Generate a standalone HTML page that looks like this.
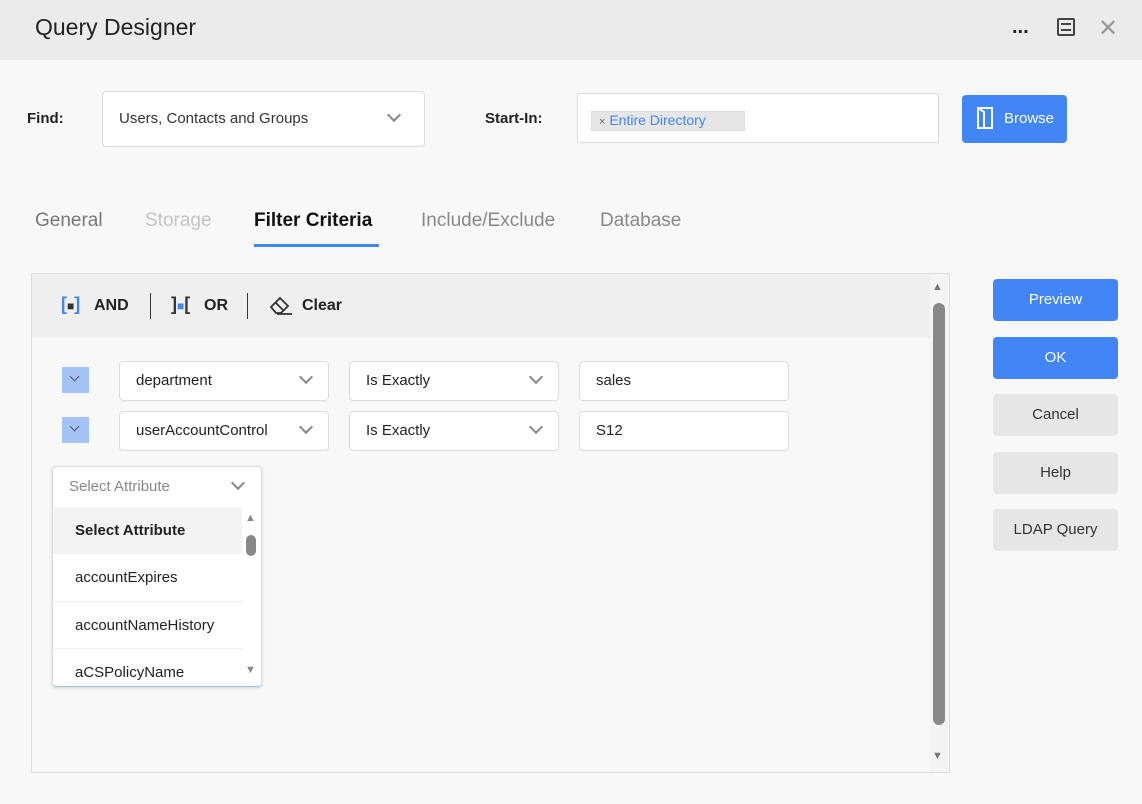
<!DOCTYPE html>
<html><head><style>
*{box-sizing:border-box;margin:0;padding:0}
body{width:1142px;height:804px;background:#f8f8f8;font-family:"Liberation Sans",sans-serif;position:relative;overflow:hidden;color:#222}
.a{position:absolute}
.box{position:absolute;background:#fff;border:1px solid #dcdcdc;border-radius:4px}
.chev{position:absolute;width:10px;height:10px;border-right:2px solid #888;border-bottom:2px solid #888;transform:rotate(45deg)}
.t{position:absolute;white-space:nowrap}
.btn{position:absolute;left:993px;width:125px;border-radius:4px;font-size:15px;text-align:center}
.blue{background:#4285f4;color:#fff}
.grey{background:#e6e6e6;color:#333}
</style></head><body>
<div class="a" style="left:0;top:0;width:1142px;height:60px;background:#ebebeb"></div>
<div class="t" style="left:35px;top:14px;font-size:23px;color:#222">Query Designer</div>
<div class="t" style="left:1012px;top:16px;font-size:20px;font-weight:bold">...</div>
<div class="a" style="left:1057px;top:18px;width:18px;height:18px;border:2px solid #444;border-radius:2px"></div>
<div class="a" style="left:1061px;top:23px;width:10px;height:8px;border-top:2px solid #444;border-bottom:2px solid #444"></div>
<div class="t" style="left:1098px;top:14px;font-size:24px;color:#999">✕</div>

<div class="t" style="left:27px;top:110px;font-size:15px;font-weight:bold">Find:</div>
<div class="box" style="left:102px;top:91px;width:323px;height:56px"></div>
<div class="t" style="left:119px;top:110px;font-size:15px;color:#333">Users, Contacts and Groups</div>
<div class="chev" style="left:389px;top:110px"></div>
<div class="t" style="left:485px;top:110px;font-size:15px;font-weight:bold">Start-In:</div>
<div class="box" style="left:577px;top:93px;width:362px;height:50px;border-radius:2px"></div>
<div class="a" style="left:591px;top:111px;width:154px;height:20px;background:#e6e6e6;border:1px solid #ddd"></div>
<div class="t" style="left:599px;top:112px;font-size:14px;color:#4285f4"><span style="color:#666;font-size:11px">×</span> Entire Directory</div>
<div class="a blue" style="left:962px;top:95px;width:105px;height:48px;border-radius:4px"></div>
<svg class="a" style="left:976px;top:106px" width="18" height="24"><path d="M2 2h14v20H2zM2 2l6 4v16" fill="none" stroke="#fff" stroke-width="2"/></svg>
<div class="t" style="left:1004px;top:110px;font-size:15px;color:#fff">Browse</div>

<div class="t" style="left:35px;top:210px;font-size:19px;color:#777">General</div>
<div class="t" style="left:145px;top:210px;font-size:19px;color:#c4c4c4">Storage</div>
<div class="t" style="left:254px;top:210px;font-size:19px;font-weight:bold;color:#111">Filter Criteria</div>
<div class="a" style="left:254px;top:244px;width:125px;height:3px;background:#4285f4"></div>
<div class="t" style="left:421px;top:210px;font-size:19px;color:#888">Include/Exclude</div>
<div class="t" style="left:600px;top:210px;font-size:19px;color:#888">Database</div>

<div class="a" style="left:31px;top:273px;width:919px;height:500px;border:1px solid #dcdcdc;background:#f8f8f8"></div>
<div class="a" style="left:32px;top:274px;width:898px;height:64px;background:#efefef"></div>
<div class="t" style="left:61px;top:294px;font-size:18px;font-weight:bold;color:#4285f4">[<span style="color:#333;font-size:12px">■</span>]</div>
<div class="t" style="left:94px;top:297px;font-size:16px;font-weight:bold">AND</div>
<div class="a" style="left:150px;top:293px;width:1px;height:26px;background:#333"></div>
<div class="t" style="left:171px;top:294px;font-size:18px;font-weight:bold;color:#333">]<span style="color:#4285f4;font-size:12px">■</span>[</div>
<div class="t" style="left:204px;top:297px;font-size:16px;font-weight:bold">OR</div>
<div class="a" style="left:247px;top:293px;width:1px;height:26px;background:#333"></div>
<svg class="a" style="left:268px;top:294px" width="26" height="24"><path d="M3 13L12 4l8 8-7 7H8z M8 9l8 8 M9 20h15" fill="none" stroke="#333" stroke-width="1.8"/></svg>
<div class="t" style="left:302px;top:297px;font-size:16px;font-weight:bold">Clear</div>

<div class="a" style="left:930px;top:274px;width:19px;height:498px;background:#f4f4f4"></div>
<div class="t" style="left:932px;top:281px;font-size:11px;color:#777">▲</div>
<div class="a" style="left:933px;top:303px;width:12px;height:422px;background:#888;border-radius:6px"></div>
<div class="t" style="left:932px;top:750px;font-size:11px;color:#777">▼</div>

<div class="a" style="left:62px;top:367px;width:27px;height:26px;background:#a4c2f4"></div>
<div class="chev" style="left:71px;top:373px;width:7px;height:7px;border-color:#556;border-width:1.5px"></div>
<div class="a" style="left:62px;top:417px;width:27px;height:26px;background:#a4c2f4"></div>
<div class="chev" style="left:71px;top:423px;width:7px;height:7px;border-color:#556;border-width:1.5px"></div>

<div class="box" style="left:119px;top:361px;width:210px;height:40px"></div>
<div class="t" style="left:136px;top:372px;font-size:15px">department</div>
<div class="chev" style="left:301px;top:372px"></div>
<div class="box" style="left:349px;top:361px;width:210px;height:40px"></div>
<div class="t" style="left:366px;top:372px;font-size:15px">Is Exactly</div>
<div class="chev" style="left:531px;top:372px"></div>
<div class="box" style="left:579px;top:361px;width:210px;height:40px"></div>
<div class="t" style="left:596px;top:372px;font-size:15px">sales</div>

<div class="box" style="left:119px;top:411px;width:210px;height:40px"></div>
<div class="t" style="left:136px;top:422px;font-size:15px">userAccountControl</div>
<div class="chev" style="left:301px;top:422px"></div>
<div class="box" style="left:349px;top:411px;width:210px;height:40px"></div>
<div class="t" style="left:366px;top:422px;font-size:15px">Is Exactly</div>
<div class="chev" style="left:531px;top:422px"></div>
<div class="box" style="left:579px;top:411px;width:210px;height:40px"></div>
<div class="t" style="left:596px;top:422px;font-size:15px">S12</div>

<div class="a" style="left:52px;top:466px;width:210px;height:221px;background:#fff;border:1px solid #dcdcdc;border-bottom-color:#9cc8dc;border-radius:4px;box-shadow:0 1px 3px rgba(0,0,0,.15)"></div>
<div class="t" style="left:69px;top:478px;font-size:15px;color:#888">Select Attribute</div>
<div class="chev" style="left:233px;top:478px"></div>
<div class="a" style="left:53px;top:507px;width:189px;height:47px;background:#f3f3f3"></div>
<div class="t" style="left:75px;top:522px;font-size:15px;font-weight:bold">Select Attribute</div>
<div class="t" style="left:75px;top:569px;font-size:15px">accountExpires</div>
<div class="a" style="left:53px;top:601px;width:189px;height:1px;background:#f0f0f0"></div>
<div class="t" style="left:75px;top:617px;font-size:15px">accountNameHistory</div>
<div class="a" style="left:53px;top:648px;width:189px;height:1px;background:#f0f0f0"></div>
<div class="t" style="left:75px;top:664px;font-size:15px">aCSPolicyName</div>
<div class="t" style="left:245px;top:512px;font-size:11px;color:#888">▲</div>
<div class="a" style="left:246px;top:535px;width:10px;height:21px;background:#888;border-radius:5px"></div>
<div class="t" style="left:245px;top:664px;font-size:11px;color:#888">▼</div>

<div class="btn blue" style="top:279px;height:42px;line-height:42px">Preview</div>
<div class="btn blue" style="top:337px;height:42px;line-height:42px">OK</div>
<div class="btn grey" style="top:394px;height:42px;line-height:42px">Cancel</div>
<div class="btn grey" style="top:452px;height:42px;line-height:42px">Help</div>
<div class="btn grey" style="top:509px;height:42px;line-height:42px">LDAP Query</div>
</body></html>
